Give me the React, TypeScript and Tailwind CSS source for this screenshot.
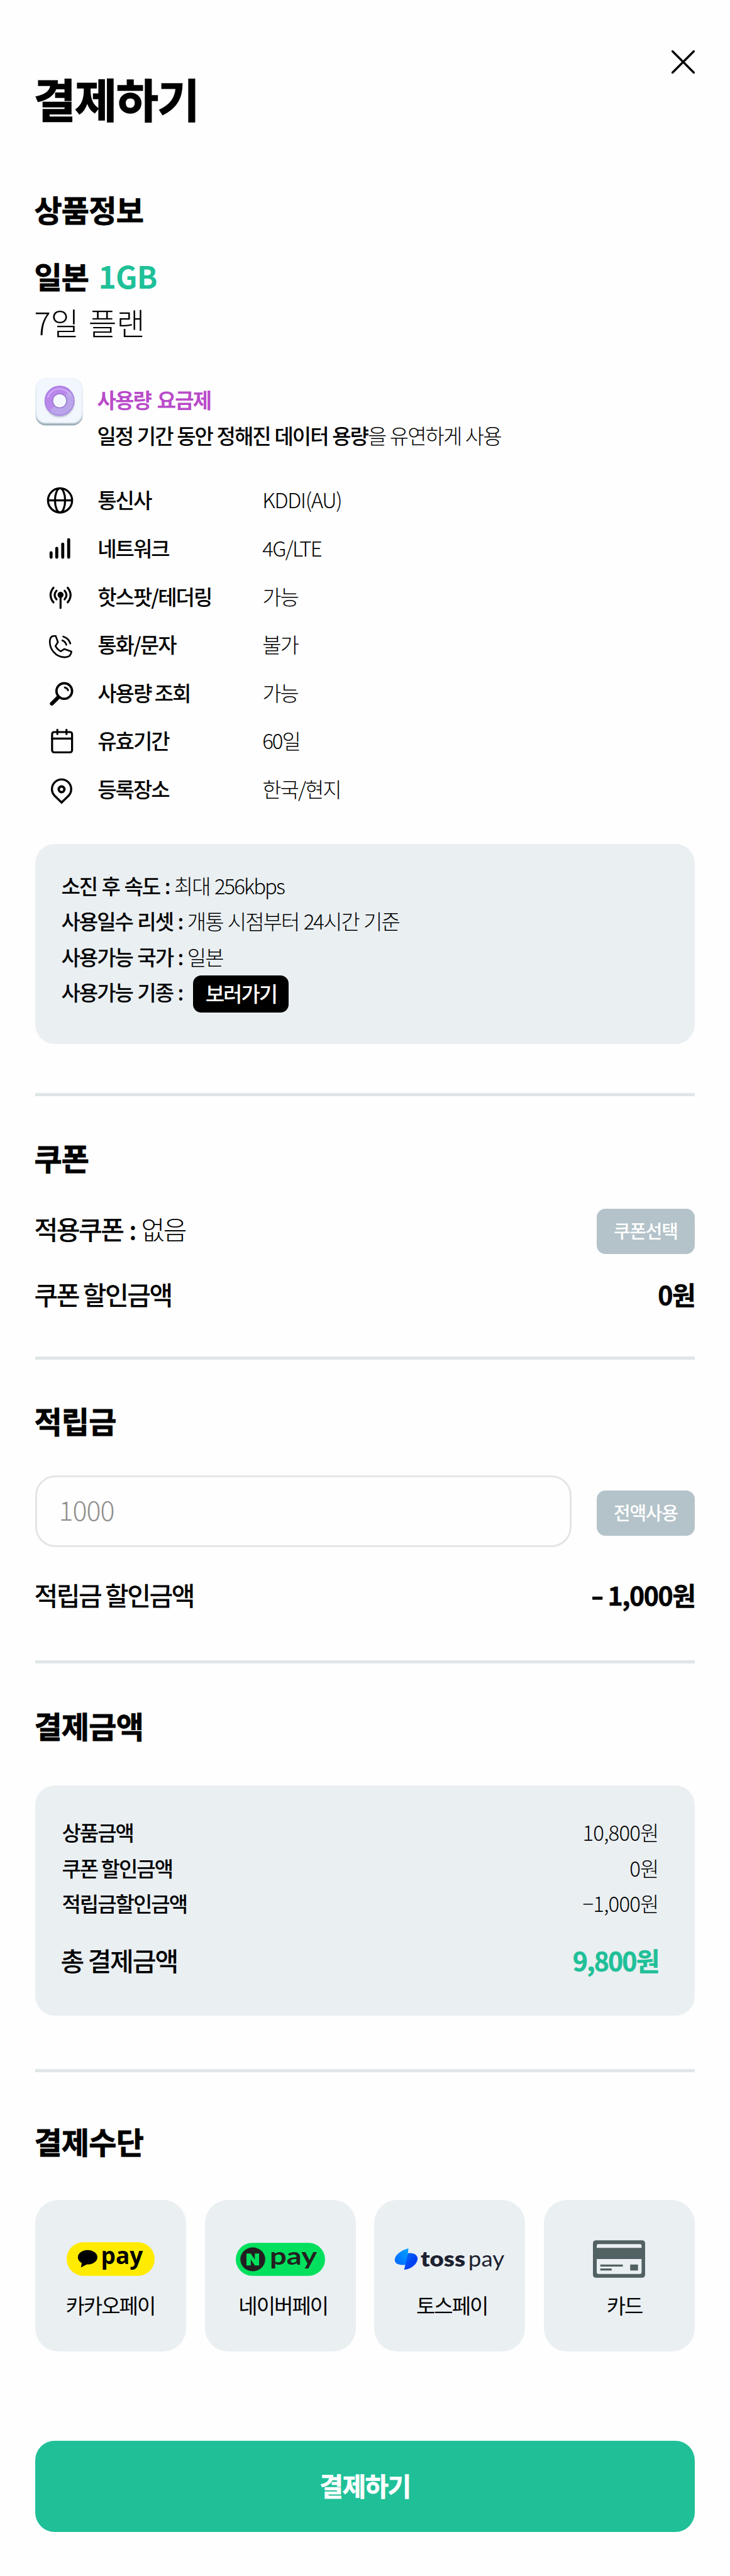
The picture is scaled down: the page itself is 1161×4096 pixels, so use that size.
import React from "react";

const specs = [
  { icon: "globe", label: "통신사", value: "KDDI(AU)", spacing: "tracking-[-0.04em]" },
  { icon: "signal", label: "네트워크", value: "4G/LTE", spacing: "tracking-[-0.05em]" },
  { icon: "antenna", label: "핫스팟/테더링", value: "가능", spacing: "" },
  { icon: "phone", label: "통화/문자", value: "불가", spacing: "" },
  { icon: "search", label: "사용량 조회", value: "가능", spacing: "" },
  { icon: "calendar", label: "유효기간", value: "60일", spacing: "" },
  { icon: "pin", label: "등록장소", value: "한국/현지", spacing: "" },
];

const icons: Record<string, React.ReactNode> = {
  globe: (
    <g strokeWidth="4">
      <circle cx="49" cy="49.2" r="23.8" />
      <ellipse cx="49" cy="49.2" rx="10" ry="23.8" />
      <path d="M25.5 49.2H72.5" />
    </g>
  ),
  signal: (
    <g strokeWidth="6">
      <path d="M31.3 58.3V67M42.5 49.6V67M54.3 41V67M66 32.4V67" />
    </g>
  ),
  antenna: (
    <g strokeWidth="4">
      <circle cx="50" cy="45.7" r="6" fill="#000" stroke="none" />
      <path d="M50 46V71.5M42 37.5Q34.5 46 42 54.5M58 37.5Q65.5 46 58 54.5M36 31.5Q24.5 46 36 60.5M64 31.5Q75.5 46 64 60.5" />
    </g>
  ),
  phone: (
    <g strokeWidth="3.3">
      <path d="M33 32.3Q36 30.8 40.5 31.5L44.8 43.5L40 51Q43.5 58 50.5 61.5L57.5 57L71.5 62Q70.5 73 59 73.3C40 73 28.8 57 28.8 43Q28.8 35 33 32.3Z" />
      <path d="M55.3 32.5Q66 35.5 69.3 46.2M53.5 40Q59.5 42.5 61.5 48.7" />
    </g>
  ),
  search: (
    <g strokeWidth="4.6">
      <circle cx="57.3" cy="45.6" r="15.4" />
      <path d="M45.5 58L32.8 70.5" strokeWidth="7.6" />
      <path d="M58.3 38.6Q63 39.5 64.8 44" strokeWidth="3.6" />
    </g>
  ),
  calendar: (
    <g strokeWidth="4">
      <rect x="33.3" y="31" width="39.4" height="40" rx="4" />
      <path d="M33.3 43.9H72.7M43.7 26.6V35M61.7 26.6V35" />
    </g>
  ),
  pin: (
    <g strokeWidth="4.2" strokeLinejoin="miter">
      <path d="M52 74.5L38.5 61.4A19 19 0 1 1 65.5 61.4Z" />
      <circle cx="52" cy="48.4" r="5.6" strokeWidth="4.8" />
    </g>
  ),
};

function UsageTile() {
  return (
    <svg className="h-[76px] w-[76px] shrink-0" viewBox="0 0 94 94">
      <defs>
        <linearGradient id="tileEdge" x1="0" y1="0" x2="0" y2="1">
          <stop offset="0" stopColor="#dbe4ea" />
          <stop offset="0.7" stopColor="#cbd9e2" />
          <stop offset="1" stopColor="#93a7b3" />
        </linearGradient>
        <clipPath id="tileClip">
          <rect x="0.5" y="0.5" width="93" height="93" rx="20" />
        </clipPath>
        <filter id="face" x="-10%" y="-10%" width="120%" height="120%">
          <feGaussianBlur stdDeviation="1.3" />
        </filter>
        <filter id="soft" x="-20%" y="-20%" width="140%" height="150%">
          <feGaussianBlur stdDeviation="1.6" />
        </filter>
      </defs>
      <rect x="0.5" y="0.5" width="93" height="93" rx="20" fill="url(#tileEdge)" />
      <g clipPath="url(#tileClip)">
        <rect x="1.5" y="0" width="91" height="89" rx="19" fill="#f2f7fe" filter="url(#face)" />
      </g>
      <circle cx="48" cy="48" r="21.5" fill="none" stroke="#8e93a8" strokeOpacity="0.6" strokeWidth="15" filter="url(#soft)" />
      <circle cx="48" cy="44.8" r="21.5" fill="#f4f8fe" stroke="#baa4ea" strokeWidth="16.4" />
      <path d="M32.8 60A21.5 21.5 0 0 1 63.2 29.6" fill="none" stroke="#ba88ec" strokeWidth="16.4" />
      <circle cx="48" cy="44.8" r="28.4" fill="none" stroke="#a67fdc" strokeWidth="1.4" />
      <circle cx="48" cy="44.8" r="14" fill="none" stroke="#9d7cd3" strokeWidth="2" />
      <path d="M25 38A24 24 0 0 1 70 36" fill="none" stroke="#d7b4fa" strokeWidth="2" strokeLinecap="round" />
    </svg>
  );
}

function KakaoLogo() {
  return (
    <svg className="h-[54px] w-[140px]" viewBox="0 0 172 66">
      <rect width="172" height="66" rx="33" fill="#ffeb00" />
      <ellipse cx="41" cy="29.5" rx="19" ry="14" />
      <path d="M30 38L28 49.5L42 42Z" />
      <text x="67" y="42.5" fontFamily="'Open Sans'" fontWeight="700" fontSize="47" textLength="82" lengthAdjust="spacingAndGlyphs">pay</text>
    </svg>
  );
}

function NaverLogo() {
  return (
    <svg className="h-[53px] w-[142px]" viewBox="0 0 176 65">
      <rect width="176" height="65" rx="32.5" fill="#03e05d" />
      <ellipse cx="33.5" cy="32.5" rx="24.5" ry="23.5" fill="#231f20" />
      <path d="M21 44.5V21H29.5L37.5 33V21H46V44.5H37.5L29.5 32.5V44.5Z" fill="#03e05d" />
      <text x="67" y="43" fontFamily="Lato" fontWeight="700" fontSize="48" fill="#231f20" textLength="93" lengthAdjust="spacingAndGlyphs">pay</text>
    </svg>
  );
}

function TossLogo() {
  return (
    <svg className="h-[44px] w-[176px]" viewBox="0 0 218 54">
      <defs>
        <linearGradient id="tossA" x1="0" y1="1" x2="1" y2="0">
          <stop offset="0" stopColor="#0064ff" />
          <stop offset="1" stopColor="#00a5ff" />
        </linearGradient>
        <linearGradient id="tossB" x1="0" y1="0" x2="1" y2="1">
          <stop offset="0" stopColor="#0a72ff" />
          <stop offset="0.6" stopColor="#0040f0" />
          <stop offset="1" stopColor="#0050ff" />
        </linearGradient>
      </defs>
      <path d="M28 6C12 10 1 20 1 29C1 36 10 40 21 38.5L24.5 38Z" fill="url(#tossA)" />
      <path d="M27 15.5C38 13.5 46 19 46 26C46 36 34 47 19.5 48Z" fill="url(#tossB)" />
      <text x="52" y="41.5" fontFamily="Lato" fontWeight="800" fontSize="43" fill="#1d2130" textLength="88" lengthAdjust="spacingAndGlyphs">toss</text>
      <text x="146" y="41.5" fontFamily="Lato" fontWeight="400" fontSize="43" fill="#1d2130" textLength="71" lengthAdjust="spacingAndGlyphs">pay</text>
    </svg>
  );
}

function CardIcon() {
  return (
    <svg className="h-[60px] w-[83px]" viewBox="0 0 103 74">
      <rect width="103" height="74" rx="6" fill="#526163" />
      <path d="M7.5 15V10.5A3 3 0 0 1 10.5 7.5H93A3 3 0 0 1 96 10.5V15ZM7.5 37H96V63.5A3 3 0 0 1 93 66.5H10.5A3 3 0 0 1 7.5 63.5Z" fill="#eaeff2" />
      <path d="M14.5 48H59V52H14.5ZM14.5 55.5H37V59.5H14.5ZM73.5 48H89V59.5H73.5Z" fill="#526163" />
    </svg>
  );
}

const methods = [
  { name: "카카오페이", logo: <KakaoLogo />, shift: "pr-[2px]" },
  { name: "네이버페이", logo: <NaverLogo />, shift: "pl-[9px]" },
  { name: "토스페이", logo: <TossLogo />, shift: "pl-[7px]" },
  { name: "카드", logo: <CardIcon />, shift: "pl-[17px]" },
];

function Section({ children, className }: { children: React.ReactNode; className: string }) {
  return (
    <h2 className={"-ml-[2px] h-[60px] text-[48px] font-bold leading-[60px] tracking-[-0.015em] [-webkit-text-stroke:0.8px_#000] " + className}>
      {children}
    </h2>
  );
}

function Rule({ className }: { className: string }) {
  return <hr className={"h-[4.8px] border-0 bg-[#dfe6e8] " + className} />;
}

function InfoLine({ label, value }: { label: string; value?: string }) {
  return (
    <p className="h-[56.4px] leading-[56.4px]">
      <span className="font-medium">{label} :</span>
      {value && <span className="font-light"> {value}</span>}
    </p>
  );
}

function SumLine({ label, value }: { label: string; value: string }) {
  return (
    <div className="flex h-[56.4px] items-center justify-between">
      <span className="font-medium">{label}</span>
      <span className="font-light tracking-[-0.025em]">{value}</span>
    </div>
  );
}

export default function App() {
  return (
    <main className="h-[4096px] w-[1161px] whitespace-nowrap bg-[#fefefe] px-[56.4px] font-['Noto_Sans_CJK_KR',sans-serif] text-black">
      <div className="flex justify-end pt-[80px]">
        <svg className="h-[37px] w-[37px]" viewBox="0 0 37 37" stroke="#000" strokeWidth="3.4" strokeLinecap="round">
          <path d="M1.5 1.5L35.5 35.5M35.5 1.5L1.5 35.5" />
        </svg>
      </div>
      <h1 className="-ml-[3px] -mt-[10px] h-[96px] text-[73px] font-bold leading-[96px] tracking-[-0.02em] [-webkit-text-stroke:1.4px_#000]">결제하기</h1>

      <Section className="mt-[99.3px]">상품정보</Section>
      <p className="-ml-[2px] mt-[46px] h-[60px] text-[48px] font-bold leading-[60px] tracking-[-0.015em] [word-spacing:5px]">
        <span className="[-webkit-text-stroke:0.8px_#000]">일본 </span>
        <span className="text-[#1fc098]">1GB</span>
      </p>
      <p className="-ml-[2px] mt-[14px] h-[60px] text-[49px] font-light leading-[60px] tracking-[0em] [word-spacing:4px]">7일 플랜</p>

      <div className="mt-[58.4px] flex h-[113px] text-[33px] tracking-[-0.06em]">
        <UsageTile />
        <div className="ml-[22px] pt-[12px] leading-[44px]">
          <p className="font-bold tracking-[-0.055em] text-[#b94bca] [word-spacing:4px]">사용량 요금제</p>
          <p className="mt-[13.6px] font-light [word-spacing:1.2px]">
            <span className="font-medium">일정 기간 동안 정해진 데이터 용량</span>을 유연하게 사용
          </p>
        </div>
      </div>

      <dl className="mt-[42px] text-[33px] tracking-[-0.06em]">
        {specs.map((s) => (
          <div key={s.icon} className="flex h-[76.65px] items-center">
            <svg className="h-[76.6px] w-[96.75px]" viewBox="0 0 120 95" fill="none" stroke="#000" strokeLinecap="round" strokeLinejoin="round">
              {icons[s.icon]}
            </svg>
            <dt className="ml-[2px] w-[262px] pt-[2px] font-medium">{s.label}</dt>
            <dd className={"pt-[2px] font-light " + s.spacing}>{s.value}</dd>
          </div>
        ))}
      </dl>

      <div className="mt-[50.2px] h-[317.6px] rounded-[31px] bg-[#eaeff2] px-[41px] pt-[37.5px] text-[33px] tracking-[-0.06em] [word-spacing:2px]">
        <InfoLine label="소진 후 속도" value="최대 256kbps" />
        <InfoLine label="사용일수 리셋" value="개통 시점부터 24시간 기준" />
        <InfoLine label="사용가능 국가" value="일본" />
        <div className="flex">
          <InfoLine label="사용가능 기종" />
          <button className="ml-[17px] mt-[2px] h-[59px] w-[152px] rounded-[13px] bg-black pb-[3px] font-medium leading-[56px] text-white">보러가기</button>
        </div>
      </div>

      <Rule className="mt-[78.3px]" />

      <Section className="mt-[67px]">쿠폰</Section>
      <div className="mt-[52px] flex h-[72px] justify-between text-[41px] tracking-[-0.06em]">
        <p className="-ml-[2px] font-light leading-[62px] [word-spacing:3px]">
          <span className="font-medium">적용쿠폰 :</span> 없음
        </p>
        <button className="h-[72px] w-[155.6px] rounded-[14px] bg-[#b4c3c9] pb-[3px] text-[29px] font-medium tracking-[-0.045em] text-white">쿠폰선택</button>
      </div>
      <div className="mt-[38.3px] flex h-[50px] justify-between text-[41px] leading-[50px] tracking-[-0.06em]">
        <span className="-ml-[2px] font-medium">쿠폰 할인금액</span>
        <span className="-mr-[1px] font-bold tracking-[-0.03em] [-webkit-text-stroke:0.5px_#000]">0원</span>
      </div>

      <Rule className="mt-[74.4px]" />

      <Section className="mt-[66.9px]">적립금</Section>
      <div className="mt-[57.8px] flex h-[113.8px] items-center justify-between tracking-[-0.06em]">
        <div className="flex h-full w-[853px] items-center rounded-[32px] border-[3.2px] border-[#e5e5e5] pb-[8px] pl-[34px] text-[43px] font-light text-[#8f8f8f]">1000</div>
        <button className="mt-[6px] h-[72px] w-[155.6px] rounded-[14px] bg-[#b4c3c9] pb-[3px] text-[29px] font-medium tracking-[-0.045em] text-white">전액사용</button>
      </div>
      <div className="mt-[50.4px] flex h-[50px] justify-between text-[41px] leading-[50px] tracking-[-0.06em]">
        <span className="-ml-[2px] font-medium">적립금 할인금액</span>
        <span className="-mr-[1px] font-bold tracking-[-0.035em] [-webkit-text-stroke:0.5px_#000]">
          <span className="inline-block origin-right scale-x-[1.4]">-</span> 1,000원
        </span>
      </div>

      <Rule className="mt-[80px]" />

      <Section className="mt-[67.7px]">결제금액</Section>
      <div className="mt-[66.6px] h-[366px] rounded-[31px] bg-[#eaeff2] pl-[42px] pr-[57px] pt-[46.5px] text-[33px] tracking-[-0.06em]">
        <SumLine label="상품금액" value="10,800원" />
        <SumLine label="쿠폰 할인금액" value="0원" />
        <SumLine label="적립금할인금액" value="−1,000원" />
        <div className="mt-[32px] flex h-[60px] items-center justify-between text-[41px]">
          <span className="-ml-[2px] font-medium">총 결제금액</span>
          <span className="font-bold tracking-[-0.045em] text-[#1fc098] [-webkit-text-stroke:0.5px_#1fc098]">9,800원</span>
        </div>
      </div>

      <Rule className="mt-[85px]" />

      <Section className="mt-[79px]">결제수단</Section>
      <div className="mt-[64px] grid grid-cols-4 gap-[29.3px]">
        {methods.map((m) => (
          <div key={m.name} className="flex h-[240.3px] flex-col items-center rounded-[37px] bg-[#eaeff2] pt-[61px]">
            <div className="flex h-[66px] items-center justify-center">{m.logo}</div>
            <p className={"mt-[18px] text-[33px] leading-[44px] tracking-[-0.06em] " + m.shift}>{m.name}</p>
          </div>
        ))}
      </div>

      <button className="mt-[142.7px] h-[145px] w-full rounded-[31px] bg-[#1fc098] pb-[5px] text-[41px] font-bold tracking-[-0.04em] text-white [-webkit-text-stroke:0.6px_#fff]">결제하기</button>
    </main>
  );
}
